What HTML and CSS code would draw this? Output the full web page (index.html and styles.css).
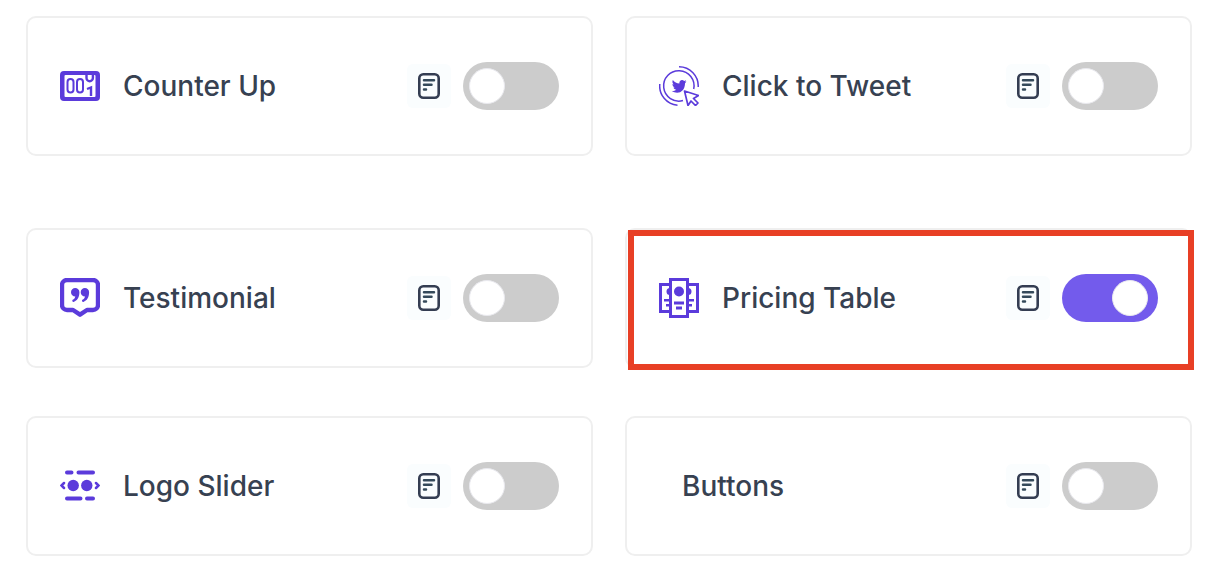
FILE: index.html
```html
<!DOCTYPE html>
<html lang="en">

<head>
    <meta charset="UTF-8">
    <meta name="viewport" content="width=device-width, initial-scale=1.0">
    <title>Blocks</title>
    <link rel="stylesheet" href="styles.css">
</head>

<body>
    <!-- Shared document icon -->
    <svg class="sprite" aria-hidden="true">
        <symbol id="doc" viewBox="0 0 22 26">
            <rect x="1.300" y="1.300" width="19.400" height="23.400" rx="4" fill="none" stroke="#343d52" stroke-width="2.600" />
            <path d="M6 7.200h10M6 11.700h7.500M6 16.500h2" fill="none" stroke="#34495a" stroke-width="2.500" stroke-linecap="round" />
        </symbol>
    </svg>

    <main class="blocks">
        <div class="row row-first">
            <div class="card">
                <svg class="icon" viewBox="0 0 40 40" aria-hidden="true">
                    <path d="M4 5h32a4 4 0 0 1 4 4v22a4 4 0 0 1-4 4H4a4 4 0 0 1-4-4V9a4 4 0 0 1 4-4zM5.500 9a1 1 0 0 0-1 1v20a1 1 0 0 0 1 1h29a1 1 0 0 0 1-1V10a1 1 0 0 0-1-1z" fill="#5b3bdb" fill-rule="evenodd" />
                    <g fill="none" stroke="#5b3bdb" stroke-width="2">
                        <rect x="7.500" y="13" width="6" height="13.500" rx="3" />
                        <rect x="17" y="13" width="6" height="13.500" rx="3" />
                        <path d="M26.500 9v3a3.200 3.200 0 0 0 6.400 0V9" stroke-width="2.400" />
                        <path d="M27 23l4-1.500V30" stroke-width="2.400" />
                    </g>
                </svg>
                <label class="name" for="counter">Counter Up</label>
                <button class="docs" type="button" aria-label="Counter Up documentation"><svg class="doc"><use href="#doc" /></svg></button>
                <input class="toggle" type="checkbox" id="counter">
            </div>

            <div class="card">
                <svg class="icon" viewBox="0 0 40 40" aria-hidden="true">
                    <g fill="none" stroke="#5b3bdb" stroke-width="1.500">
                        <path d="M24 34.500A15.200 15.200 0 1 1 34.700 23" />
                        <path d="M20 .800A19.200 19.200 0 0 1 39.200 21" />
                        <path d="M.800 18A19.200 19.200 0 0 0 18.500 39.200" />
                        <path d="M25.500 25l14 4.500-5 3 4.500 4.500-2.500 2.500-4.500-4.500-3 4.500z" stroke-width="1.700" stroke-linejoin="round" />
                    </g>
                    <path transform="translate(12.800 13) scale(1.050 1.150)" fill="#5b3bdb" d="M14 2.200l-1.500.4c.6-.4 1-.9 1.100-1.500l-1.800.7C10-.1 6.900 1.200 7.200 4 4.700 3.900 2.600 2.800 1 .9.200 2.300.6 3.900 1.900 4.800L.600 4.400c0 1.500 1 2.600 2.300 2.900l-1.300.1c.4 1.100 1.400 1.900 2.700 1.900C3.100 10.200 1.700 10.600 0 10.500c6 3.600 12.600.4 12.600-6.800z" />
                </svg>
                <label class="name" for="tweet">Click to Tweet</label>
                <button class="docs" type="button" aria-label="Click to Tweet documentation"><svg class="doc"><use href="#doc" /></svg></button>
                <input class="toggle" type="checkbox" id="tweet">
            </div>
        </div>

        <div class="row">
            <div class="card">
                <svg class="icon" viewBox="0 0 40 40" aria-hidden="true">
                    <path d="M7 2h26a5 5 0 0 1 5 5v20a5 5 0 0 1-5 5h-6l-7 4.700L13 32H7a5 5 0 0 1-5-5V7a5 5 0 0 1 5-5z" fill="none" stroke="#5b3bdb" stroke-width="4.400" stroke-linejoin="round" />
                    <path d="M11 14.300a4.200 4.200 0 0 1 8.400 0c0 5-2.200 8.500-5.700 9.600a1.200 1.200 0 0 1-1-2.100c1.500-.8 2.300-1.800 2.600-3.300A4.200 4.200 0 0 1 11 14.300zM20.700 14.300a4.200 4.200 0 0 1 8.400 0c0 5-2.200 8.500-5.700 9.600a1.200 1.200 0 0 1-1-2.100c1.500-.8 2.300-1.800 2.600-3.300a4.200 4.200 0 0 1-4.300-4.200z" fill="#5b3bdb" />
                </svg>
                <label class="name" for="testimonial">Testimonial</label>
                <button class="docs" type="button" aria-label="Testimonial documentation"><svg class="doc"><use href="#doc" /></svg></button>
                <input class="toggle" type="checkbox" id="testimonial">
            </div>

            <div class="card highlighted">
                <svg class="icon" viewBox="0 0 40 40" aria-hidden="true">
                    <g fill="none" stroke="#5b3bdb" stroke-width="3">
                        <path d="M11 6.500H1.500v27H11M29 6.500h9.500v27H29" />
                        <rect x="11.500" y="1.500" width="17" height="37" />
                    </g>
                    <g fill="#5b3bdb">
                        <circle cx="20" cy="13.500" r="5" />
                        <path d="M11 10v7a3.500 3.500 0 0 1 0-7zM29 10v7a3.500 3.500 0 0 0 0-7z" />
                        <path d="M15 23.500h10v3H15zM17 28.500h6v3h-6zM5 21h6v2.500H5zM7 26h4v2.500H7zM29 21h6v2.500h-6zM29 26h4v2.500h-4z" />
                    </g>
                </svg>
                <label class="name" for="pricing">Pricing Table</label>
                <button class="docs" type="button" aria-label="Pricing Table documentation"><svg class="doc"><use href="#doc" /></svg></button>
                <input class="toggle" type="checkbox" id="pricing" checked>
            </div>
        </div>

        <div class="row">
            <div class="card">
                <svg class="icon" viewBox="0 0 40 40" aria-hidden="true">
                    <g fill="none" stroke="#5b3bdb" stroke-width="4" stroke-linecap="round">
                        <path d="M7 6.500h4.500M18.500 6.500H33M7 32.500h13.500M27 32.500h6" />
                        <path d="M4 17l-2.500 2.500L4 22M36 17l2.500 2.500L36 22" stroke-width="2.500" />
                    </g>
                    <g fill="#5b3bdb">
                        <circle cx="13.200" cy="19.500" r="5.700" />
                        <circle cx="26.800" cy="19.500" r="5.700" />
                    </g>
                </svg>
                <label class="name" for="slider">Logo Slider</label>
                <button class="docs" type="button" aria-label="Logo Slider documentation"><svg class="doc"><use href="#doc" /></svg></button>
                <input class="toggle" type="checkbox" id="slider">
            </div>

            <div class="card">
                <label class="name" for="buttons">Buttons</label>
                <button class="docs" type="button" aria-label="Buttons documentation"><svg class="doc"><use href="#doc" /></svg></button>
                <input class="toggle" type="checkbox" id="buttons">
            </div>
        </div>
    </main>
</body>

</html>
```

FILE: styles.css
```css
*,
*::before,
*::after {
    box-sizing: border-box;
}

body {
    margin: 0;
    font-family: Inter, "Liberation Sans", sans-serif;
    background-color: #fff;
}

.sprite {
    display: none;
}

.blocks {
    display: flex;
    flex-direction: column;
    gap: 48px;
    padding: 16px 22px 30px 26px;
}

.row {
    display: grid;
    grid-template-columns: 1fr 1fr;
    gap: 32px;
}

.row-first {
    margin-bottom: 24px;
}

.card {
    display: flex;
    align-items: center;
    position: relative;
    padding: 44px 32px;
    border: 2px solid #efefef;
    border-radius: 10px;
}

/* Red frame drawn over the card */
.highlighted::after {
    content: "";
    position: absolute;
    inset: 0 -4px -4px 1px;
    border: 6px solid #e83f25;
    pointer-events: none;
}

.icon {
    width: 40px;
    height: 40px;
    flex: none;
}

.name {
    flex: 1;
    margin-left: 23px;
    font-size: 28px;
    font-weight: 500;
    line-height: 48px;
    color: #374151;
}

.docs {
    display: flex;
    align-items: center;
    justify-content: center;
    width: 44px;
    height: 44px;
    margin-right: 12px;
    padding: 0;
    border: none;
    border-radius: 6px;
    background-color: #fafdfe;
    cursor: pointer;
}

.doc {
    width: 22px;
    height: 26px;
}

.toggle {
    appearance: none;
    width: 96px;
    height: 48px;
    margin: 0;
    padding: 6px;
    border-radius: 24px;
    background-color: #ccc;
    cursor: pointer;
    transition: background-color 0.3s;
}

.toggle::before {
    content: "";
    display: block;
    width: 36px;
    height: 36px;
    border: 1px solid #e9e9ee;
    border-radius: 50%;
    background-color: #fff;
}

.toggle:checked {
    background-color: #735bec;
}

.toggle:checked::before {
    margin-left: 44px;
}
```
